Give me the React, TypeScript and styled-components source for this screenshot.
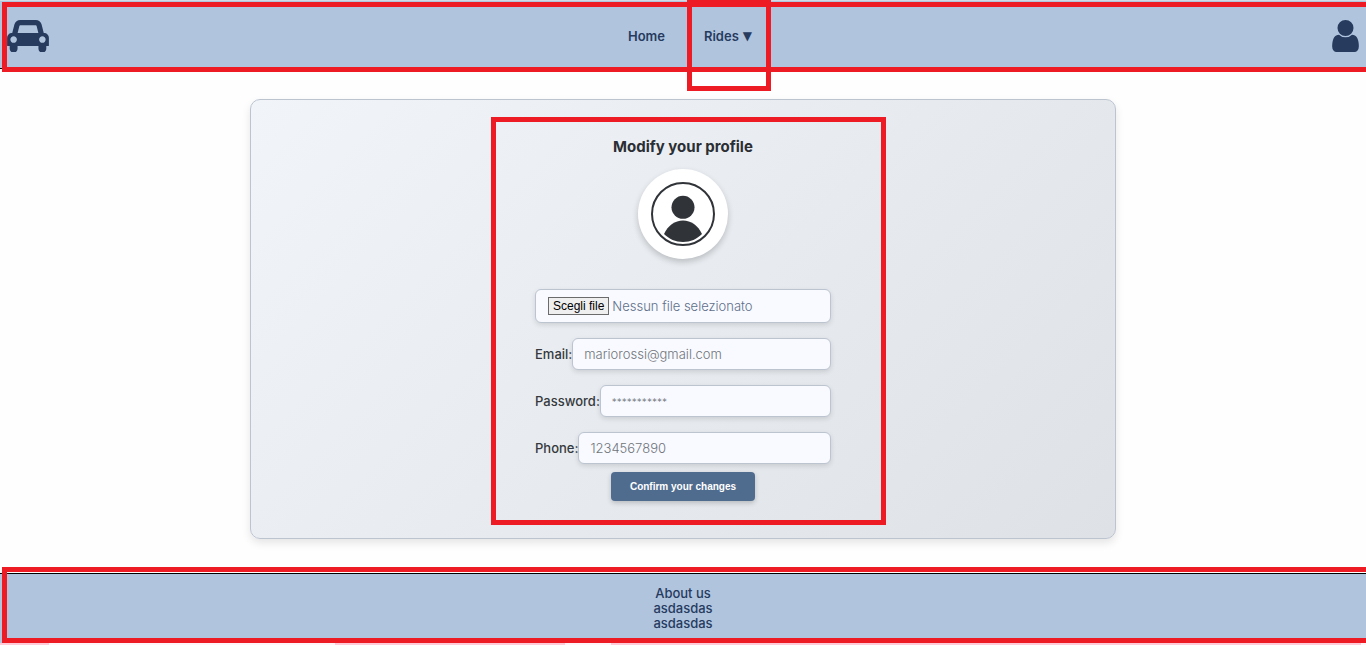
import React, { useState } from "react";
import styled, { createGlobalStyle, css } from "styled-components";

const NAVY = "#263b5e";
const BAR = "#b0c4de";
const RED = "#ed1c24";

const GlobalStyle = createGlobalStyle`
  *, *::before, *::after { box-sizing: border-box; }
  body {
    margin: 0;
    background: #fefefe;
    color: ${NAVY};
    font-family: Inter, "Open Sans", sans-serif;
    font-size: 13px;
  }
`;

const Page = styled.div`
  display: flex;
  flex-direction: column;
  overflow-x: clip;
`;

const frame = css`
  position: absolute;
  border: 5px solid ${RED};
  pointer-events: none;
`;

const BarFrame = styled.span<{ $place: "header" | "footer" }>`
  ${frame}
  left: 2px;
  right: 0;
  border-right: 0;
  ${({ $place }) =>
    $place === "header"
      ? css`top: 1px; bottom: -4px;`
      : css`top: -7px; bottom: 0;`}
`;

const MenuFrame = styled.span`
  ${frame}
  top: -3px;
  right: -19px;
  bottom: -23px;
  left: -17px;
  border-top-width: 7px;
`;

const FormFrame = styled.span`
  ${frame}
  top: -2px;
  right: -55px;
  bottom: -24px;
  left: -44px;
`;

const Header = styled.header`
  position: relative;
  display: grid;
  grid-template-columns: 1fr auto 1fr;
  height: 69px;
  padding: 2px 7px 0;
  background: ${BAR};
  border-top: 1px solid #d3dae3;
  border-bottom: 1px solid #000;
`;

const IconLink = styled.a<{ $end?: boolean }>`
  align-self: center;
  justify-self: ${({ $end }) => ($end ? "end" : "start")};
  display: flex;
  color: ${NAVY};
`;

const Nav = styled.nav`
  display: flex;
  gap: 39px;
  padding-left: 14px;
`;

const NavItem = styled.div`
  position: relative;
  display: flex;
  align-items: center;
`;

const NavLink = styled.a`
  display: flex;
  align-items: center;
  gap: 4px;
  color: ${NAVY};
  font-weight: 600;
  line-height: 16px;
  text-decoration: none;
  white-space: nowrap;
`;

const Caret = styled.span`
  font-family: "DejaVu Sans", sans-serif;
  font-size: 12px;
  font-weight: 400;
`;

const Main = styled.main`
  padding: 30px 16px 34px;
`;

const Card = styled.section`
  max-width: 866px;
  margin: 0 auto;
  padding: 19px 16px 37px;
  border: 1px solid #bcc4d0;
  border-radius: 10px;
  background: linear-gradient(135deg, #f1f5f9, #dee2e6);
  box-shadow: 0 4px 8px rgba(0, 0, 0, 0.1);
`;

const Form = styled.form`
  position: relative;
  display: flex;
  flex-direction: column;
  max-width: 296px;
  margin: 0 auto;
  padding-top: 18px;
`;

const Title = styled.h1`
  margin: 0 0 12px;
  color: #2b2e33;
  font-size: 15px;
  font-weight: 700;
  line-height: 20px;
  text-align: center;
`;

const Avatar = styled.div`
  display: flex;
  align-self: center;
  align-items: center;
  justify-content: center;
  width: 90px;
  height: 90px;
  margin-bottom: 30px;
  border-radius: 50%;
  background: #fff;
  box-shadow: 0 3px 6px rgba(0, 0, 0, 0.2);
`;

const box = css`
  border: 1px solid #bcc4d0;
  border-radius: 6px;
  background: #f8faff;
  box-shadow: 0 2px 5px rgba(0, 0, 0, 0.12);
`;

const FileBox = styled.label`
  ${box}
  position: relative;
  display: flex;
  align-items: center;
  gap: 3px;
  height: 34px;
  margin-bottom: 15px;
  padding: 0 12px;
  color: #5f6f89;
  font-weight: 300;
`;

const FileInput = styled.input`
  position: absolute;
  inset: 0;
  width: 100%;
  opacity: 0;
`;

const FileButton = styled.span`
  padding: 0 4px;
  border: 1px solid #6b6b6b;
  background: #efefef;
  color: #000;
  font: 12px/16px "Liberation Sans", Arial, sans-serif;
`;

const Field = styled.div`
  display: flex;
  align-items: center;
  margin-bottom: 15px;

  &:last-of-type { margin-bottom: 8px; }
`;

const Label = styled.label`
  color: #35393d;
  font-weight: 500;
`;

const Input = styled.input`
  ${box}
  flex: 1;
  min-width: 0;
  height: 32px;
  padding: 0 11px;
  color: #333;
  font: inherit;
  font-weight: 300;

  &::placeholder { color: #70747a; }
  &[type="password"]::placeholder { font-size: 10px; }
`;

const Submit = styled.button`
  align-self: center;
  width: 144px;
  height: 29px;
  padding: 0;
  border: 0;
  border-radius: 4px;
  background: #4f6c8f;
  color: #fff;
  font: bold 10px/14px "Liberation Sans", Arial, sans-serif;
  box-shadow: 0 2px 5px rgba(0, 0, 0, 0.2);
`;

const Footer = styled.footer`
  position: relative;
  padding: 12px 16px;
  border-top: 1px solid #000;
  background: ${BAR};
  font-weight: 500;
  line-height: 15px;
  text-align: center;
`;

const FooterLine = styled.p`
  margin: 0;
`;

const Strip = styled.div`
  display: grid;
  grid-template-columns: 49fr 286fr 230fr 46fr 750fr 5fr;
  height: 2px;
`;

const StripPart = styled.span<{ $pink?: boolean }>`
  background: ${({ $pink }) => ($pink ? "#ffcbd9" : "#fff5f8")};
`;

const CarIcon = () => (
  <svg width="42" height="32" viewBox="0 128 2048 1568" fill="currentColor" aria-hidden="true">
    <path d="M480 1088q0-66-47-113t-113-47-113 47-47 113 47 113 113 47 113-47 47-113zm36-320h1016l-89-357q-2-8-14-17.500t-21-9.500h-768q-9 0-21 9.500t-14 17.500zm1372 320q0-66-47-113t-113-47-113 47-47 113 47 113 113 47 113-47 47-113zm160-96v384q0 14-9 23t-23 9h-96v128q0 80-56 136t-136 56-136-56-56-136v-128h-1024v128q0 80-56 136t-136 56-136-56-56-136v-128h-96q-14 0-23-9t-9-23v-384q0-93 65.500-158.500t158.500-65.500h28l105-419q23-94 104-157.500t179-63.500h768q98 0 179 63.500t104 157.500l105 419h28q93 0 158.500 65.500t65.500 158.500z" />
  </svg>
);

const UserIcon = () => (
  <svg width="27" height="32" viewBox="256 128 1280 1536" fill="currentColor" aria-hidden="true">
    <path d="M1536 1399q0 109-62.500 187t-150.500 78h-854q-88 0-150.500-78t-62.500-187q0-85 8.500-160.500t31.500-152 58.500-131 94-89 134.500-34.500q131 128 313 128t313-128q76 0 134.500 34.500t94 89 58.500 131 31.500 152 8.500 160.500zm-256-887q0 159-112.500 271.500t-271.500 112.500-271.500-112.500-112.500-271.500 112.500-271.500 271.500-112.500 271.500 112.500 112.500 271.500z" />
  </svg>
);

const AvatarIcon = () => (
  <svg width="64" height="64" viewBox="0 0 64 64" fill="#303338" aria-hidden="true">
    <circle cx="32" cy="32" r="31" fill="none" stroke="#303338" strokeWidth="2" />
    <circle cx="32" cy="25.300" r="11.500" />
    <path d="M13 52C17 43.500 24 38.500 32 38.500S47 43.500 51 52C46 57 39.500 60 32 60S18 57 13 52Z" />
  </svg>
);

const fields = [
  { id: "email", label: "Email:", type: "email", placeholder: "mariorossi@gmail.com" },
  { id: "password", label: "Password:", type: "password", placeholder: "***********" },
  { id: "phone", label: "Phone:", type: "tel", placeholder: "1234567890" },
];

export default function App() {
  const [fileName, setFileName] = useState("Nessun file selezionato");

  return (
    <Page>
      <GlobalStyle />
      <Header>
        <IconLink href="#" aria-label="Car rides"><CarIcon /></IconLink>
        <Nav>
          <NavItem><NavLink href="#">Home</NavLink></NavItem>
          <NavItem>
            <NavLink href="#">Rides <Caret>▼</Caret></NavLink>
            <MenuFrame />
          </NavItem>
        </Nav>
        <IconLink href="#" aria-label="Profile" $end><UserIcon /></IconLink>
        <BarFrame $place="header" />
      </Header>
      <Main>
        <Card>
          <Form onSubmit={(e) => e.preventDefault()}>
            <Title>Modify your profile</Title>
            <Avatar><AvatarIcon /></Avatar>
            <FileBox>
              <FileInput
                type="file"
                onChange={(e) => setFileName(e.target.files?.[0]?.name ?? "Nessun file selezionato")}
              />
              <FileButton>Scegli file</FileButton>
              <span>{fileName}</span>
            </FileBox>
            {fields.map((f) => (
              <Field key={f.id}>
                <Label htmlFor={f.id}>{f.label}</Label>
                <Input id={f.id} type={f.type} placeholder={f.placeholder} />
              </Field>
            ))}
            <Submit type="submit">Confirm your changes</Submit>
            <FormFrame />
          </Form>
        </Card>
      </Main>
      <Footer>
        <FooterLine>About us</FooterLine>
        <FooterLine>asdasdas</FooterLine>
        <FooterLine>asdasdas</FooterLine>
        <BarFrame $place="footer" />
      </Footer>
      <Strip>
        <StripPart $pink />
        <StripPart />
        <StripPart $pink />
        <StripPart />
        <StripPart $pink />
        <StripPart />
      </Strip>
    </Page>
  );
}
